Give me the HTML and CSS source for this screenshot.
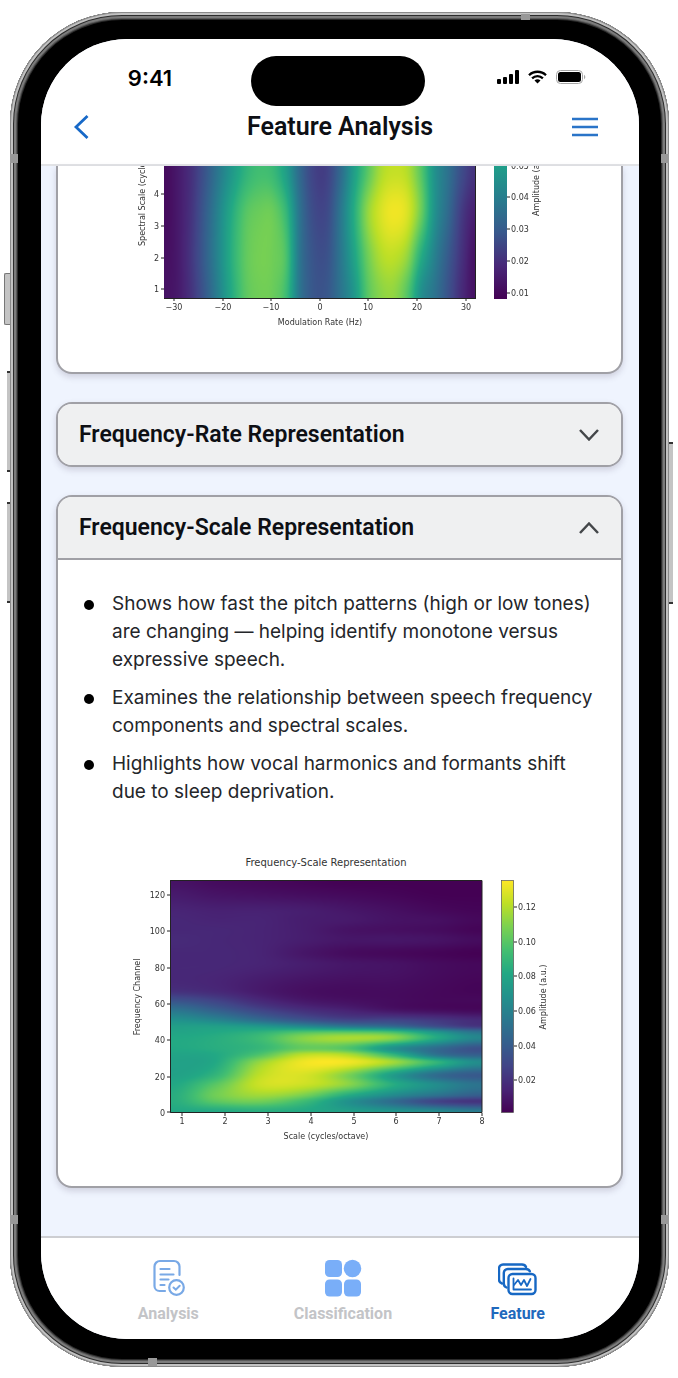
FILE: index.html
```html
<!DOCTYPE html>
<html lang="en">
<head>
<meta charset="utf-8">
<meta name="viewport" content="width=device-width, initial-scale=1">
<title>Feature Analysis</title>
<link rel="stylesheet" href="styles.css">
</head>
<body>
<div class="phone">
  <span class="key key-action"></span>
  <span class="key key-up"></span>
  <span class="key key-down"></span>
  <span class="key key-power"></span>
  <span class="antenna antenna-top"></span>
  <span class="antenna antenna-left-high"></span>
  <span class="antenna antenna-right-high"></span>
  <span class="antenna antenna-left-low"></span>
  <span class="antenna antenna-right-low"></span>
  <span class="antenna antenna-bottom"></span>

  <div class="screen">
    <header class="top">
      <div class="status">
        <span class="time">9:41</span>
        <span class="island"></span>
        <span class="indicators">
          <svg width="22" height="14" viewBox="0 0 22 14" aria-label="Signal"><rect x="0" y="9" width="4" height="5" rx="1"/><rect x="6" y="7" width="4" height="7" rx="1"/><rect x="12" y="4" width="4" height="10" rx="1"/><rect x="18" y="0" width="4" height="14" rx="1"/></svg>
          <svg width="19" height="14" viewBox="0 0 19 14" aria-label="Wi-Fi"><g fill="none" stroke="#000" stroke-width="2.3"><path d="M1 5.2a12.2 12.2 0 0 1 17 0"/><path d="M4.1 8.4a7.7 7.7 0 0 1 10.8 0"/></g><path d="M9.5 13.6 6.5 10.6a4.3 4.3 0 0 1 6 0z"/></svg>
          <svg width="30" height="14" viewBox="0 0 30 14" aria-label="Battery"><rect x=".5" y=".5" width="26" height="13" rx="4" fill="none" stroke="#a6a6a6"/><rect x="2" y="2" width="23" height="10" rx="2.5"/><path d="M28 4.8c1.8.8 1.8 3.600 0 4.400z" fill="#a6a6a6"/></svg>
        </span>
      </div>
      <div class="nav">
        <button class="icon-button" type="button" aria-label="Back"><svg width="16" height="26" viewBox="0 0 16 26"><path d="M14.500 2 3 13l11.500 11" fill="none" stroke="#1769c8" stroke-width="2.800"/></svg></button>
        <h1 class="title">Feature Analysis</h1>
        <button class="icon-button icon-button-end" type="button" aria-label="Menu"><svg width="28" height="20" viewBox="0 0 28 20"><path d="M1 2h26M1 10h26M1 18h26" stroke="#2a74c8" stroke-width="2.600"/></svg></button>
      </div>
    </header>

    <main class="content">
      <section class="card card-scrolled">
        <svg class="chart" viewBox="0 0 420 206" role="img" aria-label="Scale-rate heat map">
          <foreignObject x="34" y="0" width="312" height="132"><canvas class="heat" id="rate-map" width="312" height="132"></canvas></foreignObject>
          <path class="axis" d="M34 132.500h312M345.500 0v132"/>
          <path class="axis" d="M44 132v3M93 132v3M141 132v3M190 132v3M238 132v3M287 132v3M336 132v3M31 28h3M31 60h3M31 92h3M31 123h3"/>
          <g class="tick mid"><text x="44" y="144">−30</text><text x="93" y="144">−20</text><text x="141" y="144">−10</text><text x="190" y="144">0</text><text x="238" y="144">10</text><text x="287" y="144">20</text><text x="336" y="144">30</text></g>
          <g class="tick end"><text x="29" y="31">4</text><text x="29" y="63">3</text><text x="29" y="95">2</text><text x="29" y="126">1</text></g>
          <text class="tick mid" x="190" y="159">Modulation Rate (Hz)</text>
          <text class="tick" transform="translate(15 80) rotate(-90)">Spectral Scale (cycles/octave)</text>
          <defs><linearGradient id="bar-low" x1="0" y1="0" x2="0" y2="1"><stop offset="0" stop-color="#1f9e89"/><stop offset=".25" stop-color="#287c8e"/><stop offset=".5" stop-color="#38588c"/><stop offset=".75" stop-color="#482878"/><stop offset="1" stop-color="#440154"/></linearGradient></defs>
          <rect x="364" y="0" width="13" height="133" fill="url(#bar-low)"/>
          <path class="axis" d="M377 31h3M377 63h3M377 95h3M377 127h3"/>
          <g class="tick"><text x="381" y="3">0.05</text><text x="381" y="34">0.04</text><text x="381" y="66">0.03</text><text x="381" y="98">0.02</text><text x="381" y="130">0.01</text></g>
          <text class="tick" transform="translate(409 50) rotate(-90)">Amplitude (a.u.)</text>
        </svg>
      </section>

      <section class="card">
        <h2 class="card-heading"><button class="card-toggle" type="button" aria-expanded="false">Frequency-Rate Representation<svg width="22" height="14" viewBox="0 0 22 14"><path d="M2 2l9 9.500L20 2" fill="none" stroke="#44474a" stroke-width="2.500"/></svg></button></h2>
      </section>

      <section class="card">
        <h2 class="card-heading card-heading-open"><button class="card-toggle" type="button" aria-expanded="true">Frequency-Scale Representation<svg width="22" height="14" viewBox="0 0 22 14"><path d="M2 12l9-9.500L20 12" fill="none" stroke="#44474a" stroke-width="2.500"/></svg></button></h2>
        <div class="card-body">
          <ul class="notes">
            <li>Shows how fast the pitch patterns (high or low tones) are changing — helping identify monotone versus expressive speech.</li>
            <li>Examines the relationship between speech frequency components and spectral scales.</li>
            <li>Highlights how vocal harmonics and formants shift due to sleep deprivation.</li>
          </ul>
          <svg class="chart" viewBox="0 0 420 300" role="img" aria-label="Frequency-scale heat map">
            <text class="chart-title mid" x="195" y="16">Frequency-Scale Representation</text>
            <foreignObject x="39" y="30" width="312" height="233"><canvas class="heat" id="scale-map" width="312" height="233"></canvas></foreignObject>
            <path class="axis" d="M39.500 30.500h311.500v232h-311.500z"/>
            <path class="axis" d="M51 263v3M94 263v3M137 263v3M180 263v3M223 263v3M265 263v3M308 263v3M351 263v3M36 45h3M36 81h3M36 118h3M36 154h3M36 190h3M36 227h3M36 262h3"/>
            <g class="tick mid"><text x="51" y="274">1</text><text x="94" y="274">2</text><text x="137" y="274">3</text><text x="180" y="274">4</text><text x="223" y="274">5</text><text x="265" y="274">6</text><text x="308" y="274">7</text><text x="351" y="274">8</text></g>
            <g class="tick end"><text x="34" y="48">120</text><text x="34" y="84">100</text><text x="34" y="121">80</text><text x="34" y="157">60</text><text x="34" y="193">40</text><text x="34" y="230">20</text><text x="34" y="266">0</text></g>
            <text class="tick mid" x="195" y="289">Scale (cycles/octave)</text>
            <text class="tick mid" transform="translate(9 147) rotate(-90)">Frequency Channel</text>
            <defs><linearGradient id="bar-full" x1="0" y1="0" x2="0" y2="1"><stop offset="0" stop-color="#fde725"/><stop offset=".1" stop-color="#bddf26"/><stop offset=".2" stop-color="#7ad151"/><stop offset=".3" stop-color="#44bf70"/><stop offset=".4" stop-color="#22a884"/><stop offset=".5" stop-color="#21918c"/><stop offset=".6" stop-color="#2a788e"/><stop offset=".7" stop-color="#355f8d"/><stop offset=".8" stop-color="#414487"/><stop offset=".9" stop-color="#482475"/><stop offset="1" stop-color="#440154"/></linearGradient></defs>
            <rect x="370.500" y="30.500" width="12" height="232" fill="url(#bar-full)" stroke="#555" stroke-width=".7"/>
            <path class="axis" d="M383 57h3M383 92h3M383 126h3M383 161h3M383 196h3M383 230h3"/>
            <g class="tick"><text x="387" y="60">0.12</text><text x="387" y="95">0.10</text><text x="387" y="129">0.08</text><text x="387" y="164">0.06</text><text x="387" y="199">0.04</text><text x="387" y="233">0.02</text></g>
            <text class="tick mid" transform="translate(415 147) rotate(-90)">Amplitude (a.u.)</text>
          </svg>
        </div>
      </section>
    </main>

    <nav class="tabs">
      <a class="tab" href="#analysis">
        <svg width="36" height="38" viewBox="0 0 36 38" fill="none" stroke="#79a9e6" stroke-width="2.200" stroke-linecap="round"><path d="M29.500 16V7.500a5.500 5.500 0 0 0-5.500-5.500H10a5.500 5.500 0 0 0-5.500 5.500v19.500a5 5 0 0 0 5 5H15"/><path d="M10.500 10h9M10.500 15.500h13M10.500 20.500h8M10.500 26h4"/><circle cx="26.500" cy="28.500" r="7.300"/><path d="M23.500 28.500l2.300 2.200 3.900-4" stroke-width="2"/></svg>
        <span>Analysis</span>
      </a>
      <a class="tab" href="#classification">
        <svg width="38" height="38" viewBox="0 0 38 38" fill="#79aef8"><rect x="1" y="1" width="17" height="17" rx="4.500"/><circle cx="28.500" cy="9.500" r="8.700"/><rect x="1" y="20.500" width="17" height="17" rx="4.500"/><rect x="20" y="20.500" width="17" height="17" rx="4.500"/></svg>
        <span>Classification</span>
      </a>
      <a class="tab tab-current" href="#feature" aria-current="page">
        <svg width="40" height="38" viewBox="1 0 40 38" fill="none" stroke="#1768c4" stroke-width="2.400" stroke-linecap="round" stroke-linejoin="round"><path d="M5 24.500c-2-.6-3-2-3-4V9.500a4 4 0 0 1 4-4h19c2 0 3.300.8 4 2.500"/><path d="M9.500 28.500c-1.800-.7-2.700-2-2.700-4V14a4 4 0 0 1 4-4h18c2 0 3.400.8 4 2.300"/><rect x="11.500" y="15" width="27" height="20" rx="4"/><g stroke-width="1.800"><path d="M16.500 19.500v11H34"/><path d="M17 26l4-5 3 5 3-5 3 6 3.500-7"/></g></svg>
        <span>Feature</span>
      </a>
    </nav>
  </div>
</div>
<script src="charts.js"></script>
</body>
</html>
```
FILE: styles.css
```css
* {
  box-sizing: border-box;
}

body {
  margin: 0;
  padding: 12px 9px 11px 10px;
  background: #fff;
  color: #0d0f14;
  font-family: Roboto, "Liberation Sans", sans-serif;
}

h1,
h2,
ul {
  margin: 0;
  padding: 0;
}

button {
  border: 0;
  padding: 0;
  background: none;
  color: inherit;
  font: inherit;
}

svg {
  display: block;
  flex: none;
}

/* Device */
.phone {
  position: relative;
  padding: 27px 30px 28px 31px;
  border-radius: 112px;
  background: #000;
  box-shadow:
    inset 0 0 0 1px #8a8a8a,
    inset 0 0 0 3px #c2c2c2,
    inset 0 0 0 4px #2c2c2c,
    inset 0 0 0 6px #7c7c7c,
    inset 0 0 0 7px #5a5a5a,
    inset 0 0 0 8px #2b2b2b;
}

.key {
  position: absolute;
  left: -3px;
  width: 3px;
  height: 101px;
  background: #c4c4c4;
  border: solid #333;
  border-width: 2px 0;
}

.key-action {
  left: -6px;
  top: 261px;
  width: 6px;
  height: 52px;
  border: 1px solid #777;
  border-right: 0;
  border-radius: 2px 0 0 2px;
}

.key-up {
  top: 359px;
}

.key-down {
  top: 490px;
}

.key-power {
  left: auto;
  right: -4px;
  top: 430px;
  width: 4px;
  height: 162px;
}

.antenna {
  position: absolute;
  width: 8px;
  height: 9px;
  background: #999;
}

.antenna-top {
  top: 2px;
  right: 139px;
  width: 9px;
  height: 6px;
}

.antenna-left-high {
  top: 142px;
  left: 0;
}

.antenna-right-high {
  top: 142px;
  right: 0;
}

.antenna-left-low {
  bottom: 143px;
  left: 0;
}

.antenna-right-low {
  bottom: 143px;
  right: 0;
}

.antenna-bottom {
  bottom: 1px;
  left: 138px;
  width: 9px;
  height: 8px;
}

.screen {
  display: flex;
  flex-direction: column;
  overflow: hidden;
  border-radius: 86px;
  background: #eff4fe;
}

/* Header */
.top {
  padding-top: 17px;
  background: #fff;
  border-bottom: 2px solid #e2e3e6;
}

.status {
  display: grid;
  grid-template-columns: 1fr 174px 1fr;
  padding-right: 4px;
}

.time {
  padding-left: 8px;
  color: #000;
  font: 600 22px/44px Inter, sans-serif;
  text-align: center;
}

.island {
  height: 50px;
  border-radius: 25px;
  background: #000;
}

.indicators {
  display: flex;
  align-items: center;
  justify-content: flex-end;
  gap: 9px;
  height: 42px;
  padding-right: 49px;
}

.nav {
  display: grid;
  grid-template-columns: 28px 1fr 28px;
  align-items: center;
  height: 42px;
  margin-bottom: 16px;
  padding: 0 40px 0 32px;
  padding: 0 40px;
}

.icon-button {
  display: flex;
  margin-left: -8px;
}

.icon-button-end {
  justify-content: flex-end;
  margin-left: 0;
}

.title {
  font-size: 25px;
  font-weight: 600;
  line-height: 32px;
  text-align: center;
}

/* Cards */
.content {
  display: flex;
  flex-direction: column;
  gap: 28px;
  padding: 0 16px 48px 15px;
}

.card {
  overflow: hidden;
  border: 2px solid #a0a0a6;
  border-radius: 16px;
  background: #fff;
  box-shadow: 0 3px 6px rgba(90, 80, 110, .22);
}

.card-scrolled {
  border-top: 0;
  border-radius: 0 0 16px 16px;
}

.card-heading {
  background: #eff0f1;
  font-size: 23px;
  font-weight: 600;
}

.card-heading-open {
  border-bottom: 2px solid #a0a0a6;
}

.card-toggle {
  display: flex;
  align-items: center;
  justify-content: space-between;
  width: 100%;
  padding: 16px 21px;
  line-height: 29px;
  text-align: left;
}

.card-body {
  padding: 30px 24px 36px 26px;
}

.notes {
  display: grid;
  gap: 10px;
  margin-bottom: 44px;
  color: #24262a;
  font: 400 19px/28px Inter, sans-serif;
  list-style: none;
}

.notes li {
  display: grid;
  grid-template-columns: 10px 1fr;
  gap: 18px;
}

.notes li::before {
  content: "";
  width: 10px;
  height: 10px;
  margin-top: 10px;
  border-radius: 50%;
  background: #000;
}

/* Charts */
.chart {
  width: 420px;
  max-width: 100%;
  margin: 0 auto;
  font-family: "DejaVu Sans", sans-serif;
}

.heat {
  display: block;
}

.axis {
  fill: none;
  stroke: #222;
  stroke-width: 1px;
}

.tick {
  fill: #333;
  font-size: 8px;
}

.chart-title {
  fill: #333;
  font-size: 10px;
}

.mid {
  text-anchor: middle;
}

.end {
  text-anchor: end;
}

/* Tab bar */
.tabs {
  display: grid;
  grid-template-columns: repeat(3, 1fr);
  padding: 21px 34px 16px 40px;
  border-top: 2px solid #cdced2;
  background: #fff;
}

.tab {
  display: flex;
  flex-direction: column;
  align-items: center;
  gap: 8px;
  color: #c3c4c7;
  font-size: 16px;
  font-weight: 700;
  line-height: 18px;
  text-decoration: none;
}

.tab-current {
  color: #1f69bd;
}
```
FILE: charts.js
```js
const VIRIDIS = [
  [68, 1, 84], [72, 36, 117], [65, 68, 135], [53, 95, 141], [42, 120, 142],
  [33, 145, 140], [34, 168, 132], [68, 191, 112], [122, 209, 81], [189, 223, 38], [253, 231, 37]
];

function colour(v) {
  const t = Math.min(Math.max(v, 0), 1) * (VIRIDIS.length - 1);
  const i = Math.min(Math.floor(t), VIRIDIS.length - 2);
  return VIRIDIS[i].map((c, k) => c + (VIRIDIS[i + 1][k] - c) * (t - i));
}

// Cubic interpolation through unevenly spaced samples.
function sample(xs, ys, x) {
  let i = 0;
  while (i < xs.length - 2 && x > xs[i + 1]) i++;
  const h = xs[i + 1] - xs[i];
  const slope = j => (j <= 0 || j >= xs.length - 1) ? 0
    : (ys[j + 1] - ys[j - 1]) / (xs[j + 1] - xs[j - 1]);
  const t = (x - xs[i]) / h;
  const t2 = t * t, t3 = t2 * t;
  return (2 * t3 - 3 * t2 + 1) * ys[i] + (t3 - 2 * t2 + t) * h * slope(i)
    + (3 * t2 - 2 * t3) * ys[i + 1] + (t3 - t2) * h * slope(i + 1);
}

// rows: [vertical position 0..1, samples evenly spaced from left to right]
function drawHeat(id, rows) {
  const canvas = document.getElementById(id);
  const { width, height } = canvas;
  const ctx = canvas.getContext("2d");
  const image = ctx.createImageData(width, height);
  const pos = rows.map(r => r[0]);
  const cols = rows[0][1].map((_, i, a) => i / (a.length - 1));
  for (let x = 0; x < width; x++) {
    const column = rows.map(r => sample(cols, r[1], x / (width - 1)));
    for (let y = 0; y < height; y++) {
      const c = colour(sample(pos, column, y / (height - 1)));
      image.data.set([c[0], c[1], c[2], 255], (y * width + x) * 4);
    }
  }
  ctx.putImageData(image, 0, 0);
}

drawHeat("rate-map", [
  [0, [.03, .07, .14, .26, .40, .53, .64, .69, .67, .55, .34, .20, .19, .34, .55, .73, .87, .91, .88, .73, .50, .37, .23, .15]],
  [.35, [.03, .07, .15, .29, .45, .61, .73, .77, .77, .66, .38, .23, .22, .39, .61, .83, .94, .98, .94, .77, .50, .34, .17, .09]],
  [.69, [.04, .07, .16, .30, .46, .63, .75, .79, .78, .71, .39, .26, .25, .39, .57, .77, .88, .90, .83, .61, .43, .28, .14, .05]],
  [1, [.05, .07, .15, .28, .44, .61, .74, .78, .77, .68, .39, .27, .27, .38, .52, .73, .82, .83, .72, .49, .38, .25, .12, .05]]
]);

drawHeat("scale-map", [
  [0, [.05, .03, .02, .01, 0, 0, 0, 0]],
  [.055, [.07, .05, .04, .03, .02, .01, 0, 0]],
  [.126, [.10, .09, .09, .08, .06, .04, .02, .01]],
  [.17, [.11, .10, .10, .08, .07, .05, .04, .02]],
  [.213, [.11, .11, .10, .08, .05, .04, .03, .01]],
  [.256, [.12, .11, .10, .08, .06, .06, .05, .03]],
  [.313, [.11, .11, .10, .06, .03, .02, .01, 0]],
  [.364, [.11, .11, .10, .08, .06, .05, .03, .02]],
  [.471, [.13, .11, .07, .04, .03, .03, .02, .01]],
  [.514, [.24, .19, .11, .06, .04, .03, .02, .02]],
  [.557, [.38, .30, .20, .13, .09, .05, .03, .02]],
  [.601, [.50, .45, .35, .26, .20, .20, .16, .12]],
  [.629, [.56, .56, .53, .47, .40, .35, .24, .16]],
  [.654, [.58, .60, .64, .72, .74, .70, .52, .38]],
  [.68, [.60, .62, .68, .82, .87, .82, .60, .45]],
  [.723, [.60, .62, .66, .76, .72, .50, .35, .25]],
  [.751, [.58, .60, .72, .90, .88, .66, .38, .30]],
  [.784, [.57, .60, .84, .98, .98, .86, .65, .48]],
  [.838, [.57, .65, .90, .94, .80, .55, .35, .28]],
  [.881, [.60, .74, .92, .92, .82, .62, .48, .38]],
  [.924, [.62, .78, .86, .80, .62, .48, .38, .30]],
  [.953, [.62, .74, .78, .68, .50, .35, .20, .15]],
  [1, [.60, .60, .62, .60, .56, .52, .48, .42]]
]);
```
